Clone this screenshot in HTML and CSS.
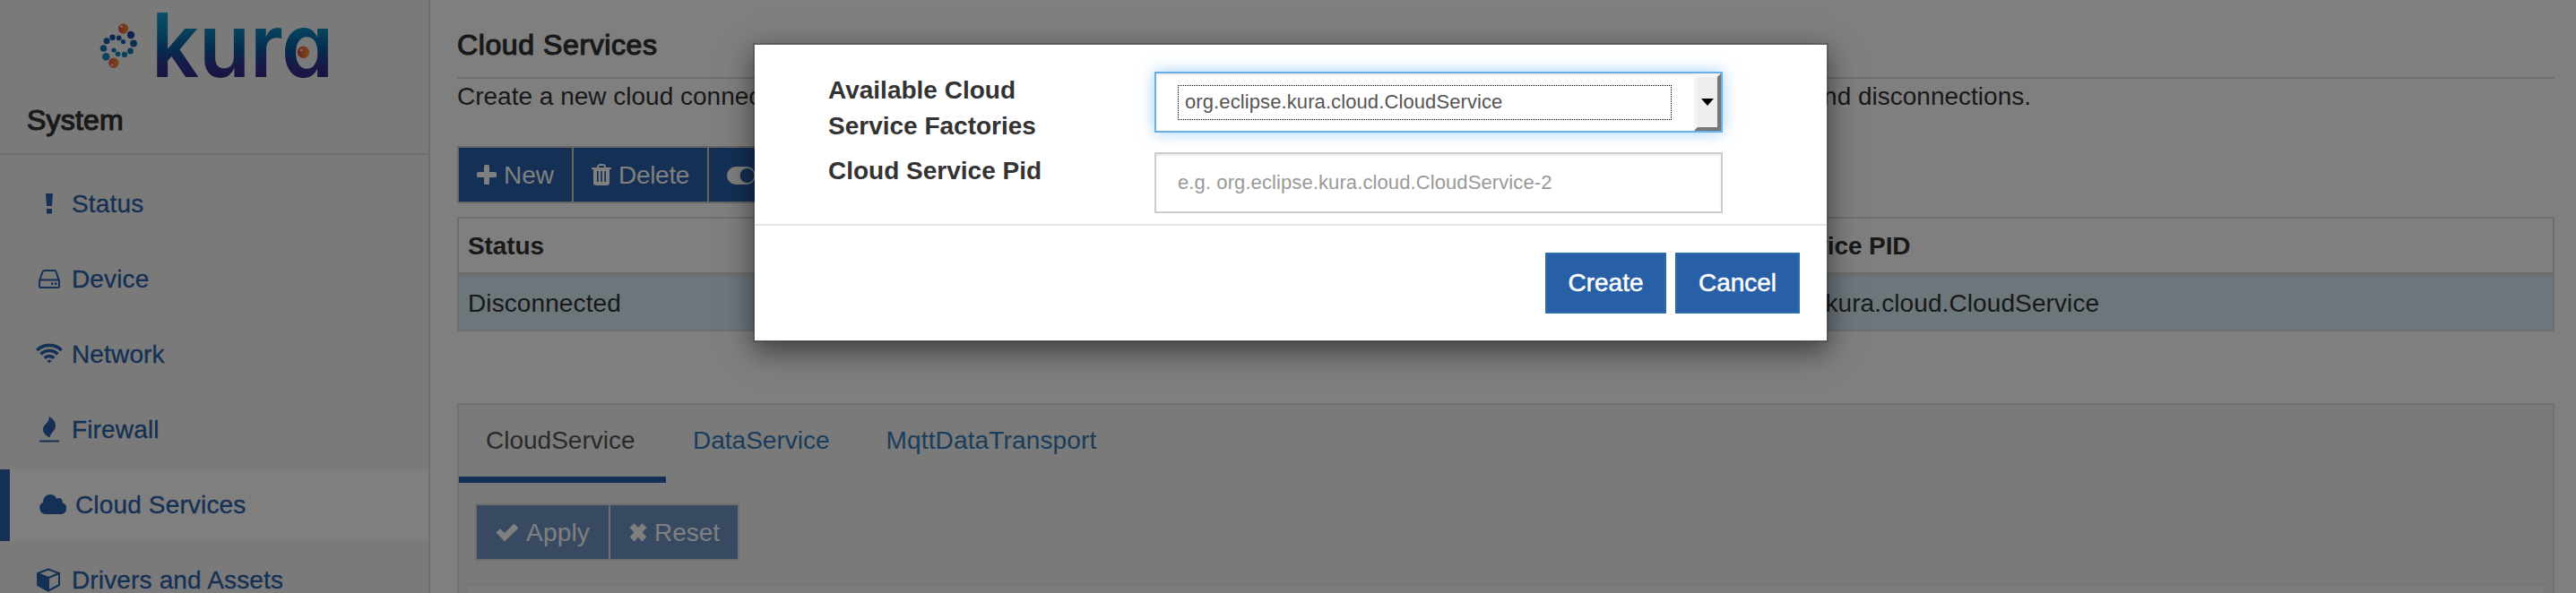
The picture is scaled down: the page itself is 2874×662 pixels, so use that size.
FILE: index.html
```html
<!DOCTYPE html>
<html lang="en">
<head>
<meta charset="utf-8">
<title>Kura - Cloud Services</title>
<link rel="stylesheet" href="styles.css">
</head>
<body>
<div class="app">
  <aside class="sidebar">
    <div class="logo">
      <svg width="280" height="112" viewBox="0 0 280 112" role="img" aria-label="kura">
        <defs>
          <linearGradient id="word" gradientUnits="userSpaceOnUse" x1="0" y1="11" x2="0" y2="86">
            <stop offset="0" stop-color="#16a3d6"/><stop offset=".25" stop-color="#0f8cc0"/><stop offset=".6" stop-color="#0c569c"/><stop offset=".85" stop-color="#32318f"/><stop offset="1" stop-color="#302a85"/>
          </linearGradient>
          <linearGradient id="ball" x1="0" x2="1" y1="0" y2="0"><stop offset="0" stop-color="#e0463a"/><stop offset="1" stop-color="#f29a38"/></linearGradient>
        </defs>
        <g fill="#1576ad">
          <circle cx="46" cy="39" r="4.2" fill="#20409a"/><circle cx="49" cy="48.500" r="3.900" fill="#1d5ba6"/><circle cx="45.500" cy="57" r="3.400"/><circle cx="39" cy="61" r="3.200" fill="#1a88b8"/><circle cx="31.500" cy="60.300" r="2.900" fill="#1a88b8"/><circle cx="27" cy="56" r="2.600"/><circle cx="37.500" cy="46.500" r="2.600" fill="#1d5ba6"/><circle cx="32.700" cy="42.400" r="2.900" fill="#1d5ba6"/><circle cx="25.500" cy="41.700" r="3.200" fill="#1c4f9c"/><circle cx="19" cy="45.800" r="3.500" fill="#1b5fa8"/><circle cx="15.500" cy="54" r="3.800"/><circle cx="18.300" cy="63.300" r="4.300" fill="#1a88b8"/>
        </g>
        <g fill="url(#ball)"><circle cx="37.700" cy="32" r="5.700"/><circle cx="27" cy="70.300" r="5.700"/></g>
        <g fill="#f8c9b4"><circle cx="35.500" cy="29.500" r="1.500"/><circle cx="25" cy="72.500" r="1.500"/></g>
        <text class="wordmark" x="69" y="85.500" textLength="203" lengthAdjust="spacingAndGlyphs" fill="url(#word)">kura</text>
        <circle cx="238.500" cy="58.300" r="6.700" fill="url(#ball)"/><circle cx="236" cy="56" r="1.700" fill="#f8c9b4"/>
      </svg>
    </div>
    <div class="system">System</div>
    <nav class="menu">
      <a class="item"><svg width="30" height="30" viewBox="0 0 30 30"><path fill="currentColor" d="M11 3h8l-1 14h-6zM12 20h6v5.500h-6z"/></svg>Status</a>
      <a class="item"><svg width="30" height="30" viewBox="0 0 30 30"><path fill="none" stroke="currentColor" stroke-width="2" d="M4 16.500L7.500 6.500Q8 5 9.500 5h11q1.500 0 2 1.500L26 16.500v6q0 1.500-1.500 1.500h-19Q4 24 4 22.500zM4 15.500h22"/><path fill="currentColor" d="M17 18.500h2.500V21H17zM21 18.500h2.500V21H21z"/></svg>Device</a>
      <a class="item"><svg width="30" height="30" viewBox="0 0 30 30"><g fill="none" stroke="currentColor" stroke-width="3.700"><path d="M1.300 10a19.500 19.500 0 0 1 27.400 0"/><path d="M5.500 14.400a13.500 13.500 0 0 1 19 0"/><path d="M9.700 18.700a7.500 7.500 0 0 1 10.600 0"/></g><path fill="currentColor" d="M12.400 21.700q2.600-2 5.200 0L15 24.500z"/></svg>Network</a>
      <a class="item"><svg width="30" height="30" viewBox="0 0 30 30"><path fill="currentColor" d="M14.500 0c5 2.500 7.500 6 7.500 10.500 0 6-6.500 7.500-6 13C10.500 21.500 8 18 8 14.500 8 8 16 7 14.500 0zM4 26.500h22v2H4z"/></svg>Firewall</a>
      <a class="item active"><svg width="30" height="30" viewBox="0 0 30 30"><path fill="currentColor" d="M7 25a7 7 0 0 1-3-13.200C4 6.500 7.500 3 12 3c3.600 0 6 1.800 7.200 4.800 3.300-2 7.300.7 6.300 4.400A6.500 6.500 0 0 1 24 25z"/></svg>Cloud Services</a>
      <a class="item"><svg width="30" height="30" viewBox="0 0 30 30"><path fill="none" stroke="currentColor" stroke-width="2" stroke-linejoin="round" d="M2 7l12-4.500L26 7v13l-12 6.500L2 20zM2 7l12 5 12-5M14 12v14"/><path fill="currentColor" d="M2 7l12 5v14.500L2 20z"/></svg>Drivers and Assets</a>
    </nav>
  </aside>
  <main class="main">
    <h1 class="title">Cloud Services</h1>
    <p class="intro"><span>Create a new cloud connection</span><span>and disconnections.</span></p>
    <div class="toolbar">
      <button class="btn new"><svg width="22" height="24" viewBox="0 0 22 24"><rect x="8" y="0" width="6" height="22" rx="1.500" fill="currentColor"/><rect x="0" y="8" width="22" height="6" rx="1.500" fill="currentColor"/></svg>New</button>
      <button class="btn delete"><svg width="22" height="26" viewBox="0 0 22 26"><path fill="none" stroke="currentColor" stroke-width="2" d="M6.500 4.500L7.500 2Q8 1 9 1h4q1 0 1.500 1l1 2.500"/><path fill="currentColor" fill-rule="evenodd" d="M0 4h22v2H0zM2 6h18v15q0 3-3 3H5q-3 0-3-3zM6 8v12h1.700V8zM10.200 8v12h1.700V8zM14.300 8v12H16V8z"/></svg>Delete</button>
      <button class="btn"><svg width="32" height="22" viewBox="0 0 32 22"><path fill="currentColor" fill-rule="evenodd" d="M10 1h12a10 10 0 0 1 0 20H10A10 10 0 0 1 10 1zM22.500 3a8 8 0 1 0 .1 0z"/></svg>Connect</button>
    </div>
    <div class="table">
      <div class="row head"><span>Status</span><span>Cloud Service PID</span></div>
      <div class="row data"><span>Disconnected</span><span>org.eclipse.kura.cloud.CloudService</span></div>
    </div>
    <section class="panel">
      <div class="tabs"><a class="tab current">CloudService</a><a class="tab">DataService</a><a class="tab">MqttDataTransport</a></div>
      <div class="toolbar actions">
        <button class="btn apply"><svg width="26" height="22" viewBox="0 0 26 22"><path fill="currentColor" stroke="currentColor" stroke-width="2" stroke-linejoin="round" d="M2 10.500L5 7.500l5 5L20.500 2l3.500 3.500L10 19z"/></svg>Apply</button>
        <button class="btn reset"><svg width="20" height="22" viewBox="0 0 20 22"><path fill="currentColor" stroke="currentColor" stroke-width="2" stroke-linejoin="round" d="M2 5l3.500-3.500L10 6.500l4.500-5L18 5l-5 5.300 5 5.200-3.500 3.500L10 14l-4.500 5L2 15.500l5-5.200z"/></svg>Reset</button>
      </div>
      <div class="form"></div>
    </section>
  </main>
</div>
<div class="backdrop">
  <div class="modal">
    <div class="modal-body">
      <label class="label">Available Cloud Service Factories</label>
      <div class="field select"><span class="value">org.eclipse.kura.cloud.CloudService</span><span class="arrow"><svg width="14" height="8" viewBox="0 0 14 8"><path d="M0 0h14L7 8z"/></svg></span></div>
      <label class="label">Cloud Service Pid</label>
      <div class="field placeholder">e.g. org.eclipse.kura.cloud.CloudService-2</div>
    </div>
    <div class="modal-footer"><button class="action">Create</button><button class="action cancel">Cancel</button></div>
  </div>
</div>
</body>
</html>
```
FILE: styles.css
```css
* { box-sizing: border-box; }
html { height: 662px; overflow: hidden; }
body { position: relative; height: 662px; margin: 0; font: 28px/40px "Liberation Sans", Arial, sans-serif; color: #333; background: #fff; overflow: hidden; }
button { font: inherit; margin: 0; }
svg { display: block; flex: none; }
.app { display: flex; width: 100%; height: 662px; overflow: hidden; }
.sidebar { width: 480px; flex: none; background: #f5f5f5; border-right: 2px solid #ddd; }
.logo { height: 112px; padding-left: 100px; }
.wordmark { font-family: Inter, "DejaVu Sans", sans-serif; font-size: 99px; line-height: 1; font-weight: 600; font-feature-settings: "cv11" 1; }
.system { height: 61px; padding: 2px 0 0 30px; font-size: 32px; border-bottom: 2px solid #ddd; -webkit-text-stroke: 1.2px #333; letter-spacing: .2px; }
.menu { display: flex; flex-direction: column; gap: 4px; padding-top: 15px; }
.item { display: flex; align-items: center; gap: 10px; height: 80px; padding: 0 0 0 40px; color: #2860a8; letter-spacing: .15px; -webkit-text-stroke: .3px #2860a8; }
.item.active { background: #fff; border-left: 11px solid #2860a8; padding-left: 33px; }
.main { flex: 1; padding: 0 24px 0 30px; }
.title { margin: 0; height: 88px; padding-top: 30px; font-size: 32px; font-weight: 400; letter-spacing: .6px; -webkit-text-stroke: 1.2px #333; border-bottom: 2px solid #ddd; }
.intro { display: flex; justify-content: space-between; margin: 0; width: 1756px; height: 75px; }
.toolbar { display: flex; width: max-content; height: 64px; background: #ccc; padding: 2px; gap: 2px; }
.btn { display: flex; align-items: center; gap: 8px; border: 0; padding: 1px 0 0 20px; background: #2860a8; color: #fff; line-height: 56px; white-space: nowrap; }
.btn:last-child { padding-right: 20px; }
.new { width: 126px; }
.delete { width: 149px; letter-spacing: -.3px; }
.apply { width: 147px; padding-left: 21px; letter-spacing: .2px; }
.btn.reset { width: 142px; padding: 1px 0 0 21px; gap: 8px; }
.table { margin-top: 15px; border: 2px solid #ddd; height: 128px; }
.row { display: grid; grid-template-columns: 1370px 1fr; padding: 11px 10px 0; }
.head { height: 64px; font-weight: 700; letter-spacing: -.1px; border-bottom: 4px solid #ddd; }
.data { height: 60px; background: #d9edf7; letter-spacing: .1px; }
.panel { margin-top: 80px; height: 300px; background: #f5f5f5; border: 2px solid #e5e5e5; }
.tabs { display: flex; height: 87px; }
.tab { padding: 20px 33px 0 30px; color: #337ab7; }
.current { width: 231px; color: #555; border-bottom: 7px solid #2860a8; }
.tab:last-child { letter-spacing: .15px; }
.actions { margin: 23px 0 0 18px; background: #ddd; }
.actions .btn { background: #7094c4; }
.form { margin: 25px 8px 0; height: 80px; border: 2px solid #eee; background: #f8f8f8; }
.backdrop { position: absolute; inset: 0; background: rgba(0,0,0,.5); }
.modal { width: 1200px; height: 334px; margin: 48px 0 0 840px; border: 2px solid rgba(0,0,0,.2); background: #fff; background-clip: padding-box; box-shadow: 0 10px 30px rgba(0,0,0,.5); }
.modal-body { display: grid; grid-template-columns: 364px 634px; grid-template-rows: 90px 80px; height: 202px; padding: 30px 0 0 82px; border-bottom: 2px solid #e5e5e5; }
.label { width: 280px; padding-top: 1px; font-weight: 700; }
.field { display: flex; align-items: center; height: 68px; border: 2px solid #ccc; padding-left: 24px; font-size: 22px; letter-spacing: .1px; box-shadow: inset 0 2px 2px rgba(0,0,0,.075); }
.select { border-color: #66afe9; box-shadow: inset 0 2px 2px rgba(0,0,0,.075), 0 0 16px rgba(102,175,233,.6); color: #555; justify-content: space-between; }
.value { width: 551px; height: 39px; border: 1px dotted #000; padding-left: 7px; line-height: 36px; }
.arrow { display: flex; align-items: center; justify-content: center; width: 30px; height: 64px; background: #eee; border: 4px solid; border-color: #f5f5f5 #777 #777 #f5f5f5; }
.placeholder { color: #999; }
.modal-footer { display: flex; justify-content: flex-end; gap: 10px; padding: 30px 30px 0 0; }
.action { width: 135px; height: 68px; padding: 0; color: #fff; background: #2860a8; border: 2px solid #2e6da4; -webkit-text-stroke: .5px #fff; }
.cancel { width: 139px; }
```
